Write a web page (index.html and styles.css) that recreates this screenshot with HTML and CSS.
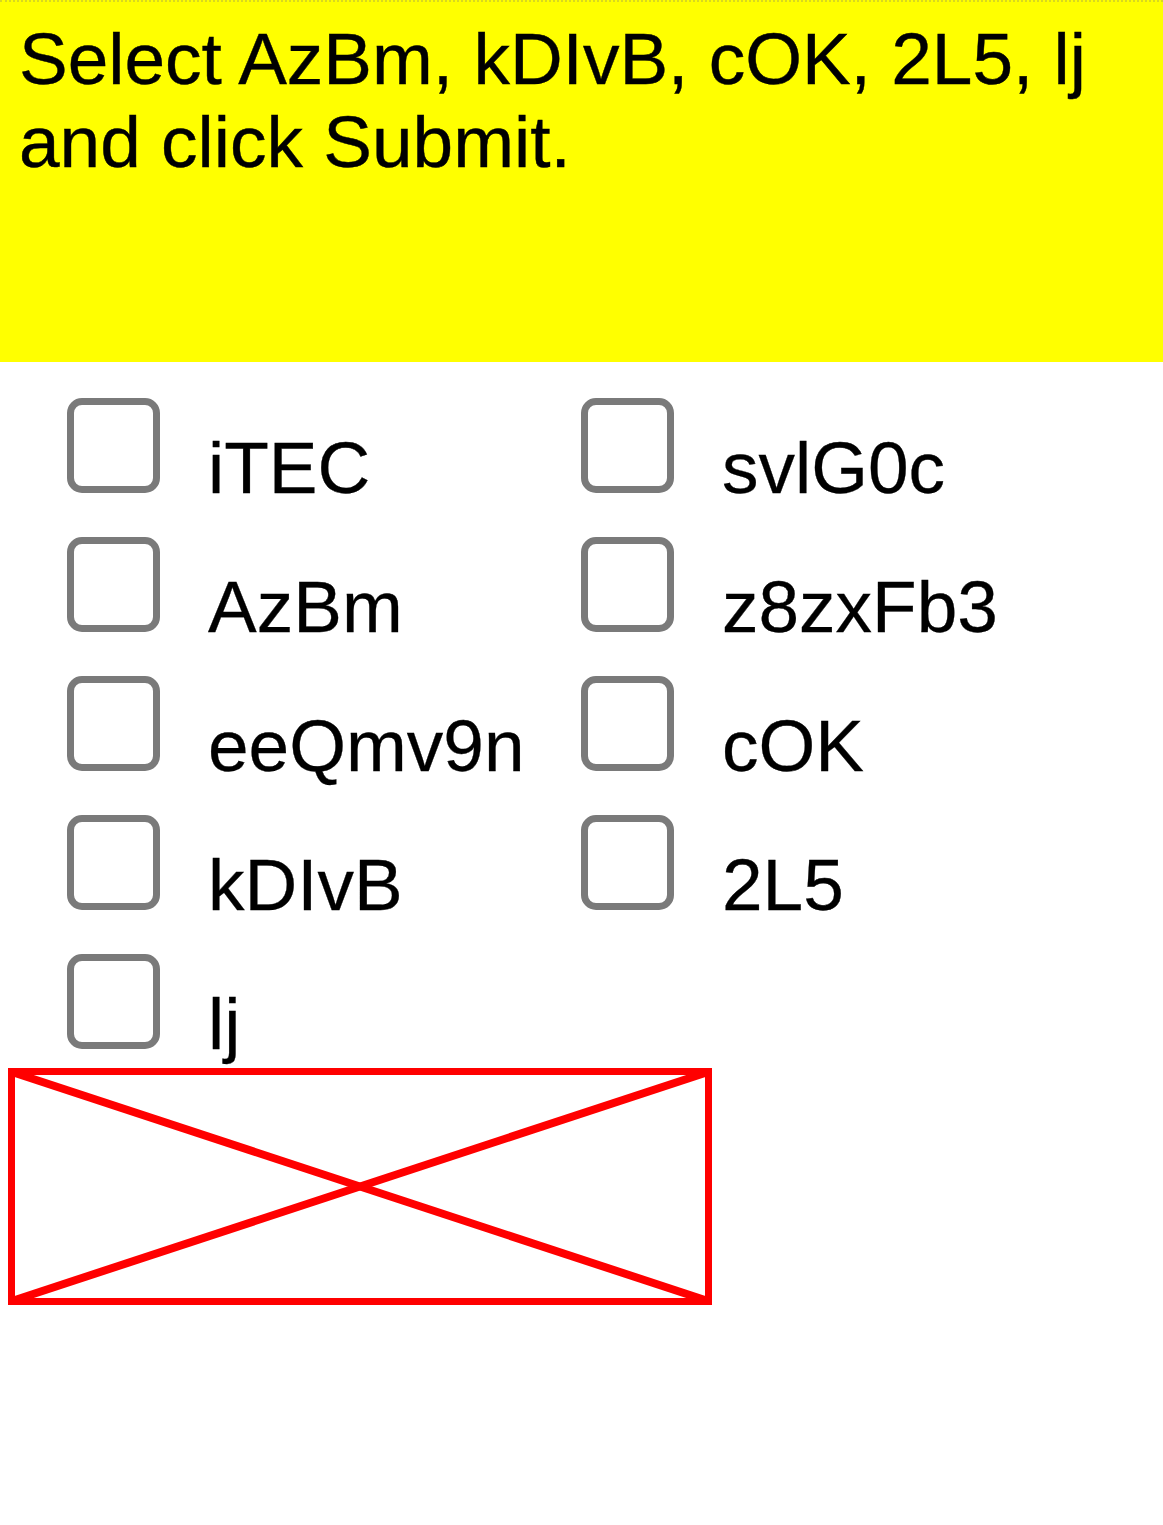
FILE: index.html
```html
<!DOCTYPE html>
<html>
<head>
<meta charset="utf-8">
<link rel="stylesheet" href="styles.css">
</head>
<body>
<div class="query">Select AzBm, kDIvB, cOK, 2L5, lj and click Submit.</div>
<div class="grid">
  <div class="item"><span class="box"></span><span class="label">iTEC</span></div>
  <div class="item"><span class="box"></span><span class="label">svlG0c</span></div>
  <div class="item"><span class="box"></span><span class="label">AzBm</span></div>
  <div class="item"><span class="box"></span><span class="label">z8zxFb3</span></div>
  <div class="item"><span class="box"></span><span class="label">eeQmv9n</span></div>
  <div class="item"><span class="box"></span><span class="label">cOK</span></div>
  <div class="item"><span class="box"></span><span class="label">kDIvB</span></div>
  <div class="item"><span class="box"></span><span class="label">2L5</span></div>
  <div class="item"><span class="box"></span><span class="label">lj</span></div>
</div>
<div class="submit">
  <svg class="cross" viewBox="0 0 704 237" preserveAspectRatio="none">
    <line x1="4" y1="4" x2="700" y2="233"/>
    <line x1="4" y1="233" x2="700" y2="4"/>
  </svg>
</div>
</body>
</html>
```
FILE: styles.css
```css
html, body {
  margin: 0;
  padding: 0;
  background: #ffffff;
}
body {
  font-family: "Liberation Sans", Arial, sans-serif;
  color: #000000;
}
.query {
  box-sizing: border-box;
  height: 362px;
  background: #ffff00;
  border-top: 2px dotted #d8d820;
  padding: 15px 20px 0 19px;
  font-size: 73px;
  line-height: 83px;
  -webkit-text-stroke: 0.4px #000000;
}
.grid {
  display: grid;
  grid-template-columns: 514px 514px;
  padding-left: 67px;
}
.item {
  display: flex;
  align-items: flex-start;
  height: 139px;
}
.box {
  box-sizing: border-box;
  flex: none;
  width: 93px;
  height: 95px;
  margin-top: 36px;
  border: 7px solid #7a7a7a;
  border-radius: 15px;
  background: #ffffff;
}
.label {
  margin-left: 48px;
  margin-top: 69px;
  font-size: 73px;
  line-height: 73px;
  white-space: nowrap;
  -webkit-text-stroke: 0.3px #000000;
}
.submit {
  box-sizing: border-box;
  position: relative;
  width: 704px;
  height: 237px;
  margin: 11px 0 0 8px;
  border: 7px solid #ff0000;
}
.cross {
  position: absolute;
  left: -7px;
  top: -7px;
  width: 704px;
  height: 237px;
}
.cross line {
  stroke: #ff0000;
  stroke-width: 8;
}
```
